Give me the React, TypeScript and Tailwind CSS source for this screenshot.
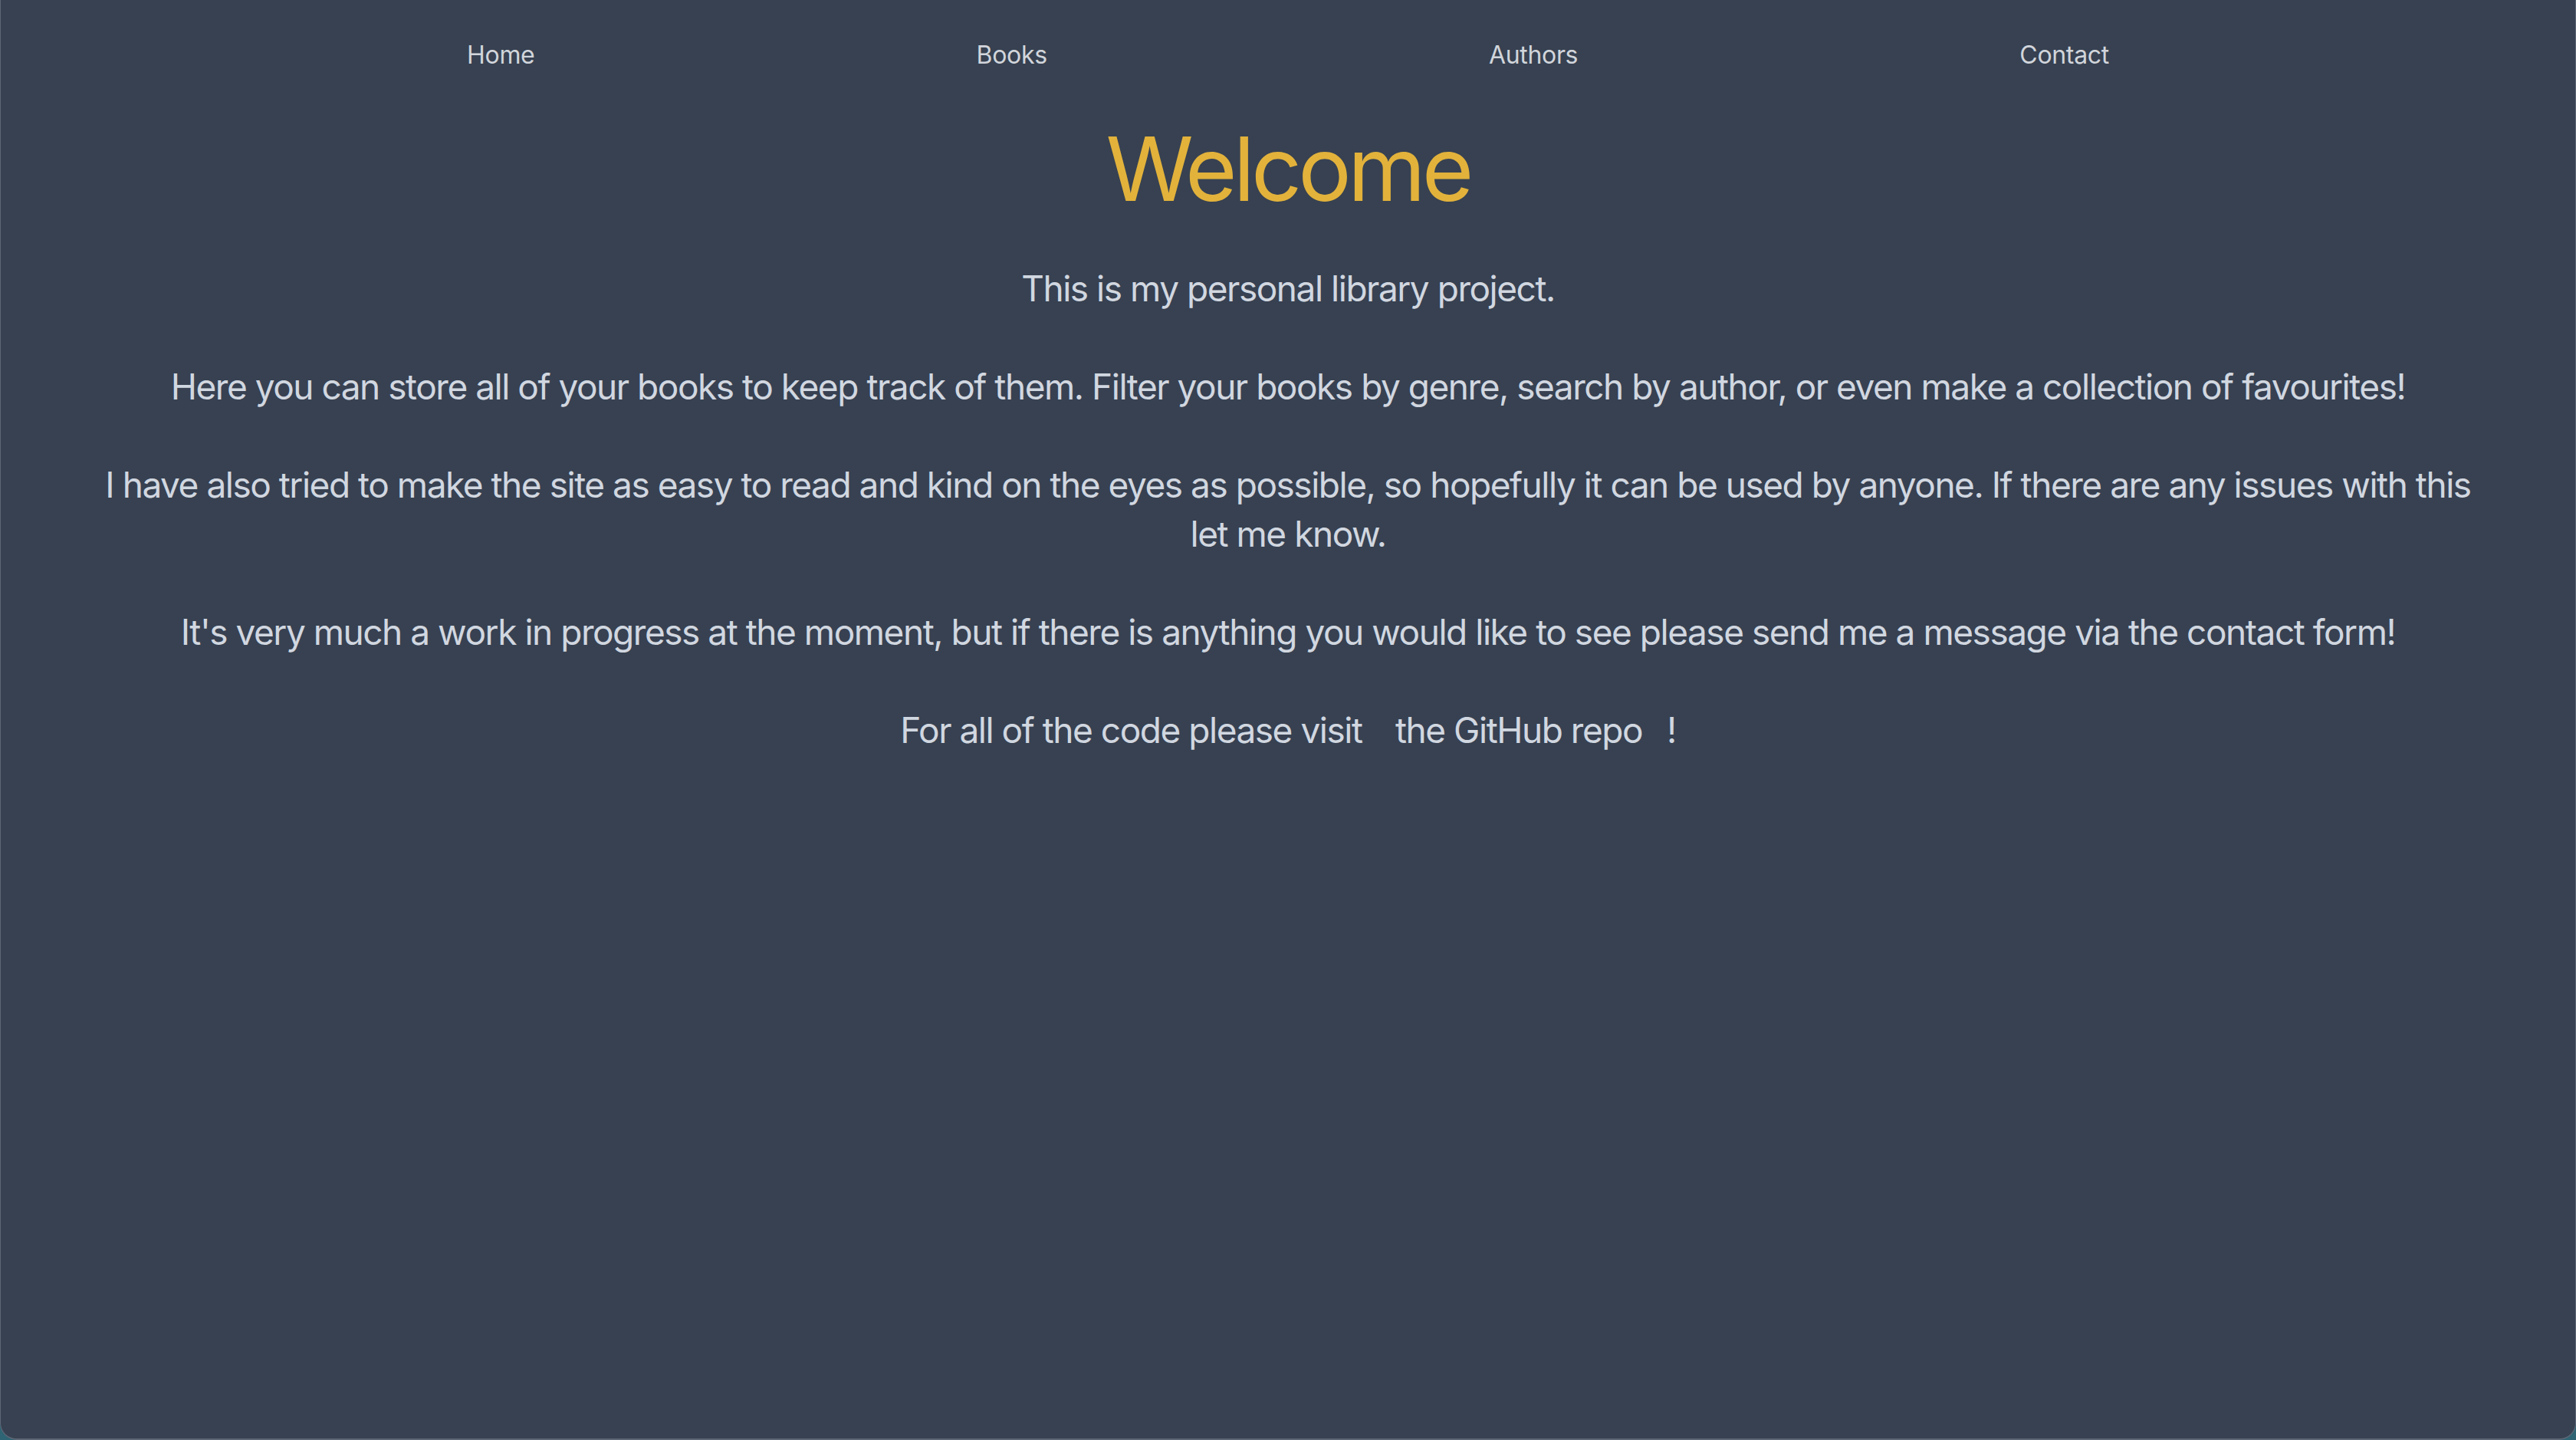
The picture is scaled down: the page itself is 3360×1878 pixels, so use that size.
import React from "react";

export default function App() {
  return (
    <div className="h-[1878px] w-[3360px] bg-[#2e6474] overflow-hidden" style={{ fontFamily: "Inter, 'Noto Sans', sans-serif" }}>
      <div className="h-full w-full bg-[#374151] border-l border-r border-b-2 border-[#5c6675] rounded-b-[22px] flex flex-col items-center">
        <nav className="w-full px-[320px] pt-[48px]">
          <ul className="flex justify-around text-[32px] leading-[48px] text-[#d1d5db] tracking-[-0.01em]">
            <li>Home</li>
            <li>Books</li>
            <li>Authors</li>
            <li>Contact</li>
          </ul>
        </nav>
        <h1 className="mt-[64px] text-[116px] leading-[120px] text-[#e2b23b] tracking-[-0.042em]">Welcome</h1>
        <div className="mt-[64px] w-full px-[128px] text-center text-[46px] leading-[64px] text-[#d1d7e0] tracking-[-0.032em]">
          <p className="mb-[64px]">This is my personal library project.</p>
          <p className="mb-[64px]">
            Here you can store all of your books to keep track of them. Filter your books by genre, search by author, or even make a collection of favourites!
          </p>
          <p className="mb-[64px]">
            I have also tried to make the site as easy to read and kind on the eyes as possible, so hopefully it can be used by anyone. If there are any issues with this let me know.
          </p>
          <p className="mb-[64px]">
            It's very much a work in progress at the moment, but if there is anything you would like to see please send me a message via the contact form!
          </p>
          <p>
            For all of the code please visit <a className="px-8">the GitHub repo</a>!
          </p>
        </div>
      </div>
    </div>
  );
}
